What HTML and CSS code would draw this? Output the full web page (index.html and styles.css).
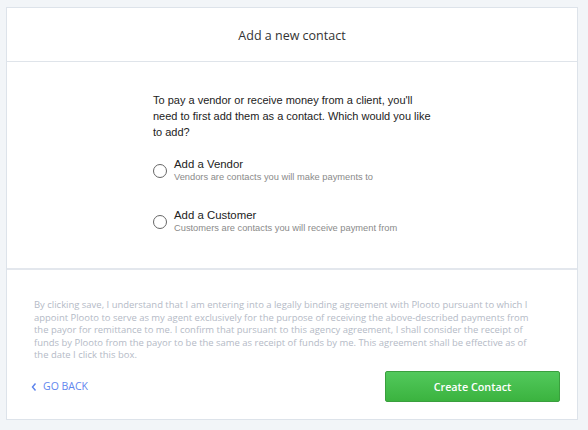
FILE: index.html
```html
<!DOCTYPE html>
<html>
<head>
<meta charset="utf-8">
<link rel="stylesheet" href="styles.css">
</head>
<body>
<div class="card">
  <div class="card-header">Add a new contact</div>
  <div class="card-body">
    <div class="content">
      <p class="intro">To pay a vendor or receive money from a client, you'll need to first add them as a contact. Which would you like to add?</p>
      <label class="option">
        <span class="radio"></span>
        <span class="option-text">
          <span class="option-title">Add a Vendor</span>
          <span class="option-sub">Vendors are contacts you will make payments to</span>
        </span>
      </label>
      <label class="option">
        <span class="radio"></span>
        <span class="option-text">
          <span class="option-title">Add a Customer</span>
          <span class="option-sub">Customers are contacts you will receive payment from</span>
        </span>
      </label>
    </div>
  </div>
  <div class="card-footer">
    <p class="disclaimer">By clicking save, I understand that I am entering into a legally binding agreement with Plooto pursuant to which I<br>appoint Plooto to serve as my agent exclusively for the purpose of receiving the above-described payments from<br>the payor for remittance to me. I confirm that pursuant to this agency agreement, I shall consider the receipt of<br>funds by Plooto from the payor to be the same as receipt of funds by me. This agreement shall be effective as of<br>the date I click this box.</p>
    <div class="actions">
      <a class="back" href="#"><svg class="chev" width="6" height="10" viewBox="0 0 6 10"><path d="M4.5 1.5 L1.5 5 L4.5 8.5" fill="none" stroke="#5b82ec" stroke-width="1.4"/></svg>GO BACK</a>
      <button class="btn-create">Create Contact</button>
    </div>
  </div>
</div>
</body>
</html>
```

FILE: styles.css
```css
* { box-sizing: border-box; }
html, body { margin: 0; padding: 0; }
body {
  background: #f2f5f8;
  padding: 7px 10px 10px 6px;
  font-family: "Open Sans", sans-serif;
}
.card {
  background: #fff;
  border: 1px solid #dde3ea;
  height: 413px;
  display: flex;
  flex-direction: column;
}
.card-header {
  height: 54px;
  border-bottom: 1px solid #dfe4ea;
  display: flex;
  align-items: center;
  justify-content: center;
  font-size: 12.5px;
  color: #333;
  padding-top: 1px;
}
.card-body {
  height: 208px;
  border-bottom: 2px solid #e3e7ed;
  display: flex;
  justify-content: center;
  padding-top: 30px;
}
.content {
  width: 282px;
  margin-left: 4px;
  font-family: "Liberation Sans", Arial, sans-serif;
}
.intro {
  margin: 0 0 17px 0;
  font-size: 11px;
  line-height: 16px;
  color: #222;
}
.option {
  display: flex;
  align-items: center;
  margin-bottom: 24px;
}
.radio {
  width: 14px;
  height: 14px;
  border: 1.5px solid #666;
  border-radius: 50%;
  margin-right: 7px;
  flex: none;
}
.option-text {
  display: flex;
  flex-direction: column;
}
.option-title {
  font-size: 11.4px;
  line-height: 14px;
  color: #222;
}
.option-sub {
  font-size: 9.3px;
  line-height: 13px;
  color: #8a8a8a;
}
.card-footer {
  flex: 1;
  padding: 29px 10px 0 27px;
}
.disclaimer {
  margin: 0;
  font-size: 9.46px;
  line-height: 12.5px;
  color: #b4bac6;
  white-space: nowrap;
}
.actions {
  display: flex;
  justify-content: space-between;
  align-items: center;
  margin-top: 9px;
  padding-right: 7px;
}
.back {
  display: flex;
  align-items: center;
  color: #5f86ee;
  font-size: 10.5px;
  text-decoration: none;
  margin-left: -3px;
}
.chev { margin-right: 6px; margin-top: 2px; }
.btn-create {
  width: 175px;
  height: 31px;
  background: linear-gradient(#52c95c, #3bb33f);
  border: 1px solid #3a9f3e;
  border-radius: 2px;
  color: #fff;
  font-family: "Open Sans", sans-serif;
  font-weight: 600;
  font-size: 10.8px;
}
```
